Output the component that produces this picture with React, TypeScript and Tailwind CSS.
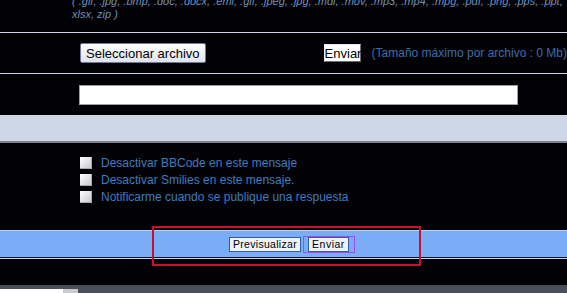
import { useState } from "react";

const OPTIONS = [
  "Desactivar BBCode en este mensaje",
  "Desactivar Smilies en este mensaje.",
  "Notificarme cuando se publique una respuesta",
];

function FakeCheck() {
  return (
    <span className="block h-[12px] w-[12px] bg-gradient-to-br from-[#ffffff] to-[#c4c6cc] shadow-[inset_-1px_-1px_0_#a8aab0]" />
  );
}

export default function App() {
  const [checked, setChecked] = useState<boolean[]>([false, false, false]);

  return (
    <div className="relative h-[293px] w-[567px] overflow-hidden bg-[#020206] font-['Liberation_Sans',Arial,sans-serif]">
      {/* allowed extensions, cut off at the top */}
      <div className="h-[32px] overflow-hidden pl-[72px]">
        <div className="-mt-[5px] text-[11px] italic leading-[13px] text-[#6f8fb8] whitespace-nowrap">
          <p>( .gif, .jpg, .bmp, .doc, .docx, .eml, .gif, .jpeg, .jpg, .mdl, .mov, .mp3, .mp4, .mpg, .pdf, .png, .pps, .ppt,</p>
          <p>xlsx, zip )</p>
        </div>
      </div>

      {/* upload row */}
      <div className="flex h-[42px] items-center border-y border-[#cdd0e6] pl-[80px]">
        <button
          type="button"
          className="h-[20px] w-[126px] rounded-[2px] border border-[#6e7a96] bg-gradient-to-b from-[#ffffff] to-[#dfe3ec] text-[13px] leading-none text-black"
        >
          Seleccionar archivo
        </button>
        <button
          type="button"
          className="ml-[118px] h-[18px] w-[37px] border border-t-[#e8e8e8] border-l-[#e8e8e8] border-r-[#6a6a6a] border-b-[#6a6a6a] bg-white p-0 text-[13px] leading-none text-black"
        >
          Enviar
        </button>
        <span className="ml-[11px] whitespace-nowrap text-[12px] text-[#3a6ea8]">
          (Tamaño máximo por archivo : 0 Mb)
        </span>
      </div>

      {/* comment input */}
      <div className="pl-[79px] pt-[11px]">
        <input
          type="text"
          className="block h-[20px] w-[439px] border border-[#9aa0ac] bg-white"
        />
      </div>

      {/* light band */}
      <div className="mt-[10px] h-[28px] border-b-2 border-[#7c8290] bg-[#cdd7e6]" />

      {/* options */}
      <div className="flex flex-col pl-[80px] pt-[11px]">
        {OPTIONS.map((label, i) => (
          <label
            key={label}
            className="flex h-[17px] cursor-pointer items-center gap-[9px] text-[12px] text-[#3d7cc0]"
            onClick={() => setChecked((c) => c.map((v, j) => (j === i ? !v : v)))}
          >
            <FakeCheck />
            <span className={checked[i] ? "underline" : ""}>{label}</span>
          </label>
        ))}
      </div>

      {/* submit bar */}
      <div className="mt-[25px] border-t border-[#b8d2f4]">
        <div className="flex h-[26px] items-center bg-[#7aadf6] pl-[229px]">
          <button
            type="button"
            className="h-[15px] w-[72px] border border-[#2f5fa0] bg-[#eef2f8] text-[10.5px] leading-none tracking-[0.3px] text-black"
          >
            Previsualizar
          </button>
          <span className="relative ml-[7px] flex">
            <button
              type="button"
              className="h-[15px] w-[41px] border border-[#2f5fa0] bg-[#eef2f8] text-[10.5px] leading-none tracking-[0.5px] text-black"
            >
              Enviar
            </button>
            <span className="pointer-events-none absolute -left-[5px] -top-[1px] h-[17px] w-[52px] border border-[#a848f0]" />
          </span>
        </div>
        <div className="h-[1px] bg-[#101018]" />
        <div className="h-[1px] bg-[#c8d6ee]" />
      </div>

      {/* red annotation frame */}
      <div className="pointer-events-none absolute left-[152px] top-[226px] h-[40px] w-[269px] border-2 border-[#c8102e]" />

      {/* bottom strip */}
      <div className="absolute bottom-0 left-0 h-[8px] w-full bg-[#4a4e5a]">
        <div className="absolute bottom-0 left-0 h-[4px] w-[63px] bg-white" />
        <div className="absolute bottom-0 left-[63px] h-[4px] w-[15px] bg-[#c8cad0]" />
      </div>
    </div>
  );
}
